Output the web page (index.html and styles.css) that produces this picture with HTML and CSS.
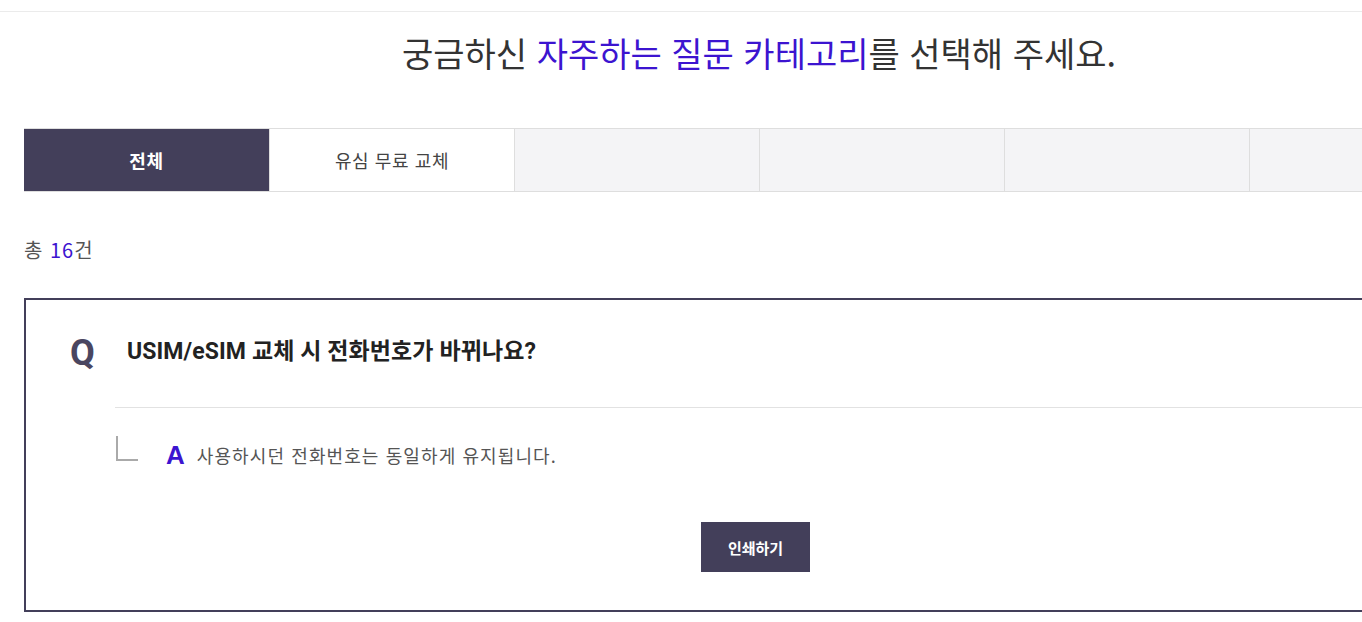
FILE: index.html
```html
<!DOCTYPE html>
<html lang="ko">
<head>
<meta charset="utf-8">
<link rel="stylesheet" href="styles.css">
</head>
<body>
<div class="topbar"></div>
<div class="wrap">
  <h1 class="title">궁금하신 <span class="hl">자주하는 질문 카테고리</span>를 선택해 주세요.</h1>
  <ul class="tabs">
    <li class="tab active">전체</li>
    <li class="tab">유심 무료 교체</li>
    <li class="tab empty"></li>
    <li class="tab empty"></li>
    <li class="tab empty"></li>
    <li class="tab empty"></li>
  </ul>
  <p class="count">총 <span class="num">16</span>건</p>
  <div class="faq">
    <div class="q-row">
      <span class="q-mark">Q</span>
      <span class="q-text">USIM/eSIM 교체 시 전화번호가 바뀌나요?</span>
    </div>
    <div class="answer">
      <div class="a-row">
        <span class="corner"></span>
        <span class="a-mark">A</span>
        <span class="a-text">사용하시던 전화번호는 동일하게 유지됩니다.</span>
      </div>
      <div class="btn-row">
        <button class="print-btn">인쇄하기</button>
      </div>
    </div>
  </div>
</div>
</body>
</html>
```
FILE: styles.css
```css
html, body {
  margin: 0;
  padding: 0;
  background: #fff;
  overflow: hidden;
}
body {
  font-family: "Noto Sans CJK KR", "Noto Sans", sans-serif;
  color: #333;
}
.topbar {
  height: 11px;
  border-bottom: 1px solid #ebebeb;
}
.wrap {
  width: 1470px;
  margin-left: 24px;
}
.title {
  margin: 0;
  padding-top: 17px;
  height: 116px;
  box-sizing: border-box;
  text-align: center;
  font-size: 34px;
  font-weight: 400;
  letter-spacing: 0;
  line-height: 48px;
  color: #333;
}
.hl { color: #3c14d0; }
.tabs {
  list-style: none;
  margin: 0;
  padding: 0;
  display: grid;
  grid-template-columns: repeat(6, 1fr);
  border-top: 1px solid #dedede;
  border-bottom: 1px solid #dedede;
  height: 64px;
  box-sizing: border-box;
}
.tab {
  display: flex;
  align-items: center;
  justify-content: center;
  background: #f4f4f6;
  border-left: 1px solid #dedede;
  font-size: 18px;
  color: #444;
  letter-spacing: 0.6px;
}
.tab:first-child { border-left: none; }
.tab.active {
  background: #433f5a;
  color: #fff;
  font-weight: 700;
}
.tab:nth-child(2) { background: #fff; }
.count {
  margin: 44px 0 0;
  font-size: 20px;
  line-height: 28px;
  color: #555;
  height: 62px;
  letter-spacing: 1px;
}
.num { color: #3c14d0; }
.faq {
  border: 2px solid #433f5a;
  height: 314px;
  box-sizing: border-box;
}
.q-row {
  display: flex;
  align-items: center;
  padding: 0 0 0 44px;
  height: 107px;
}
.q-mark {
  font-family: Roboto, "Noto Sans", sans-serif;
  font-weight: 700;
  font-size: 36px;
  color: #4a4660;
  width: 57px;
  margin-top: -2px;
}
.q-text {
  font-family: Roboto, "Noto Sans CJK KR", sans-serif;
  font-weight: 700;
  font-size: 23px;
  color: #222;
  letter-spacing: 0.1px;
  margin-top: -10px;
}
.answer {
  margin-left: 89px;
  border-top: 1px solid #e2e2e2;
}
.a-row {
  display: flex;
  align-items: center;
  height: 94px;
  padding-left: 1px;
}
.corner {
  width: 22px;
  height: 25px;
  border-left: 2px solid #aaa;
  border-bottom: 2px solid #aaa;
  box-sizing: border-box;
  margin-top: -14px;
  margin-right: 28px;
}
.a-mark {
  font-family: "Liberation Sans", Arial, sans-serif;
  font-weight: 700;
  font-size: 26px;
  color: #3c14d0;
  margin-right: 12px;
}
.a-text {
  font-size: 18px;
  color: #555;
  letter-spacing: 1.1px;
}
.btn-row {
  display: flex;
  margin-left: 586px;
  padding-top: 20px;
}
.print-btn {
  width: 109px;
  height: 50px;
  border: none;
  background: #433f5a;
  color: #fff;
  font-family: "Noto Sans CJK KR", sans-serif;
  font-weight: 700;
  font-size: 15px;
  letter-spacing: 0;
}
```
